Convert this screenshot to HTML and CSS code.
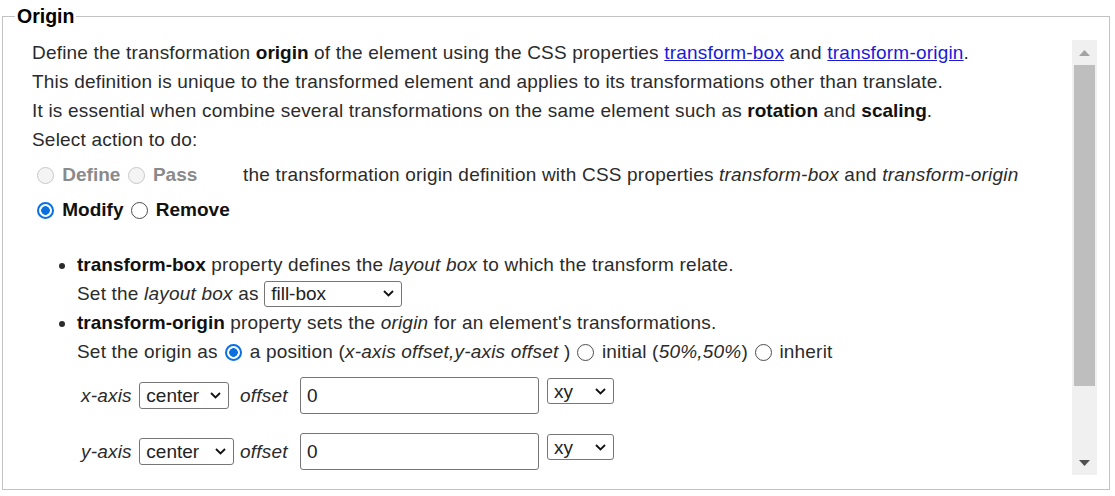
FILE: index.html
```html
<!doctype html>
<html lang="en">
  <head>
    <meta charset="UTF-8" />
    <meta name="viewport" content="width=device-width, initial-scale=1.0" />
    <title>Transform origin</title>
    <link rel="stylesheet" href="styles.css">
  </head>
  <body>
    <fieldset class="panel">
      <legend>Origin</legend>
      <div class="frame">
        <div class="scroller">
          <div class="intro">
            <div>Define the transformation <b>origin</b> of the element using the CSS properties <a href="#">transform-box</a> and <a href="#">transform-origin</a>.</div>
            <div>This definition is unique to the transformed element and applies to its transformations other than translate.</div>
            <div>It is essential when combine several transformations on the same element such as <b>rotation</b> and <b>scaling</b>.</div>
            <div>Select action to do:</div>
          </div>

          <div class="choice first">
            <span class="choice-opts">
              <label class="off"><input type="radio" name="action" disabled> Define</label>
              <label class="off"><input type="radio" name="action" disabled> Pass</label>
            </span>
            <span class="choice-note">the transformation origin definition with CSS properties <i>transform-box</i> and <i>transform-origin</i></span>
          </div>
          <div class="choice">
            <label><input type="radio" name="action" checked> Modify</label>
            <label class="next"><input type="radio" name="action"> Remove</label>
          </div>

          <ul class="props">
            <li>
              <b>transform-box</b> property defines the <i>layout box</i> to which the transform relate.<br>
              Set the <i>layout box</i> as
              <select class="box-select">
                <option>fill-box</option>
                <option>content-box</option>
                <option>border-box</option>
                <option>stroke-box</option>
                <option>view-box</option>
              </select>
            </li>
            <li>
              <b>transform-origin</b> property sets the <i>origin</i> for an element's transformations.<br>
              Set the origin as <input type="radio" name="origin" checked> a position (<i>x-axis offset,y-axis offset</i> )<input type="radio" name="origin" class="tight"> initial (<i>50%,50%</i>)<input type="radio" name="origin" class="tight"> inherit
            </li>
          </ul>

          <div class="axes">
            <span class="axis"><i>x-axis</i>
              <select class="pos-x">
                <option>center</option>
                <option>left</option>
                <option>right</option>
              </select>
            </span>
            <i>offset</i>
            <input class="offset" type="text" value="0">
            <select class="unit">
              <option>xy</option>
              <option>px</option>
              <option>%</option>
            </select>

            <span class="axis"><i>y-axis</i>
              <select class="pos-y">
                <option>center</option>
                <option>top</option>
                <option>bottom</option>
              </select>
            </span>
            <i>offset</i>
            <input class="offset" type="text" value="0">
            <select class="unit">
              <option>xy</option>
              <option>px</option>
              <option>%</option>
            </select>
          </div>
        </div>

        <div class="scrollbar">
          <div class="sb-btn">
            <svg width="11" height="6" viewBox="0 0 11 6"><path d="M0 6 L5.5 0 L11 6 Z" fill="#a3a3a3"/></svg>
          </div>
          <div class="sb-track">
            <div class="sb-thumb"></div>
          </div>
          <div class="sb-btn">
            <svg width="11" height="6" viewBox="0 0 11 6"><path d="M0 0 L11 0 L5.5 6 Z" fill="#505050"/></svg>
          </div>
        </div>
      </div>
    </fieldset>
  </body>
</html>
```

FILE: styles.css
```css
body {
  margin: 0;
  background-color: #fff;
  color: #2b2b2b;
  font-family: "Liberation Sans", Arial, sans-serif;
  font-size: 19px;
  line-height: 29px;
  letter-spacing: 0.2px;
}

b {
  color: #111;
  letter-spacing: 0;
}

a {
  color: #1a1ad8;
}

.panel {
  margin: 5px 5px 0 2px;
  padding: 13px 12px 14px 12px;
  border: 1px solid #c3c3c3;
}

.panel legend {
  padding: 0 2px;
  font-size: 19.5px;
  font-weight: bold;
  line-height: 22px;
  letter-spacing: 0;
  color: #000;
}

.frame {
  display: flex;
  height: 435px;
}

.scroller {
  flex: 1;
  overflow: hidden;
  padding-left: 17px;
}

.intro {
  margin-top: -2px;
}

/* drawn scrollbar: the page is shot with native scrollbars hidden */
.scrollbar {
  width: 25px;
  display: flex;
  flex-direction: column;
  background-color: #f0f0f0;
}

.sb-btn {
  height: 25px;
  display: flex;
  align-items: center;
  justify-content: center;
}

.sb-track {
  flex: 1;
}

.sb-thumb {
  height: 321px;
  margin: 0 2px;
  background-color: #bebebe;
}

input[type="radio"] {
  appearance: none;
  width: 17px;
  height: 17px;
  margin: 0 3px 0 5px;
  vertical-align: -3px;
  border: 1px solid #4d4d4d;
  border-radius: 50%;
  background-color: #fff;
}

input[type="radio"]:checked {
  border: 2px solid #0b6fe0;
  background: radial-gradient(circle, #0b6fe0 0 4px, #fff 4.6px);
}

input[type="radio"]:disabled {
  border-color: #c8c8c8;
  background-color: #f4f4f4;
}

.choice {
  display: flex;
  align-items: center;
  height: 35px;
  font-weight: bold;
  color: #111;
  letter-spacing: 0;
}

.choice.first {
  margin-top: 3px;
}

.choice-opts label + label input {
  margin-left: 2px;
}

.choice .next input {
  margin-left: 7px;
}

.choice-opts {
  width: 211px;
  flex-shrink: 0;
}

.choice-note {
  font-weight: normal;
  color: #2b2b2b;
  letter-spacing: 0.2px;
}

.off {
  color: #8a8a8a;
}

.props {
  margin: 23px 0 0 0;
  padding-left: 45px;
}

.props input[type="radio"] {
  margin: 0 2px;
}

.props input[type="radio"].tight {
  margin-left: 7px;
}

select {
  appearance: none;
  height: 27px;
  padding: 0 24px 0 6px;
  font-family: "Liberation Sans", Arial, sans-serif;
  font-size: 19px;
  color: #222;
  border: 1px solid #767676;
  border-radius: 3px;
  background: #fff url("data:image/svg+xml;utf8,<svg xmlns='http://www.w3.org/2000/svg' width='11' height='7' viewBox='0 0 11 7'><path d='M1 1 L5.5 5.5 L10 1' fill='none' stroke='%23111' stroke-width='1.8'/></svg>") no-repeat right 7px center;
}

.box-select {
  width: 138px;
  height: 26px;
}

.axes {
  display: grid;
  grid-template-columns: 159px 60px 247px auto;
  grid-auto-rows: 37px;
  row-gap: 19px;
  align-items: center;
  margin: 11px 0 0 49px;
}

.axis select {
  margin-left: 2px;
}

.pos-x {
  width: 90px;
}

.pos-y {
  width: 95px;
}

.offset {
  width: 239px;
  height: 37px;
  box-sizing: border-box;
  padding: 1px 6px;
  font-family: "Liberation Sans", Arial, sans-serif;
  font-size: 19px;
  color: #222;
  border: 1px solid #767676;
  border-radius: 3px;
}

.unit {
  width: 67px;
  height: 26px;
  align-self: start;
  margin-top: 1px;
}
```
